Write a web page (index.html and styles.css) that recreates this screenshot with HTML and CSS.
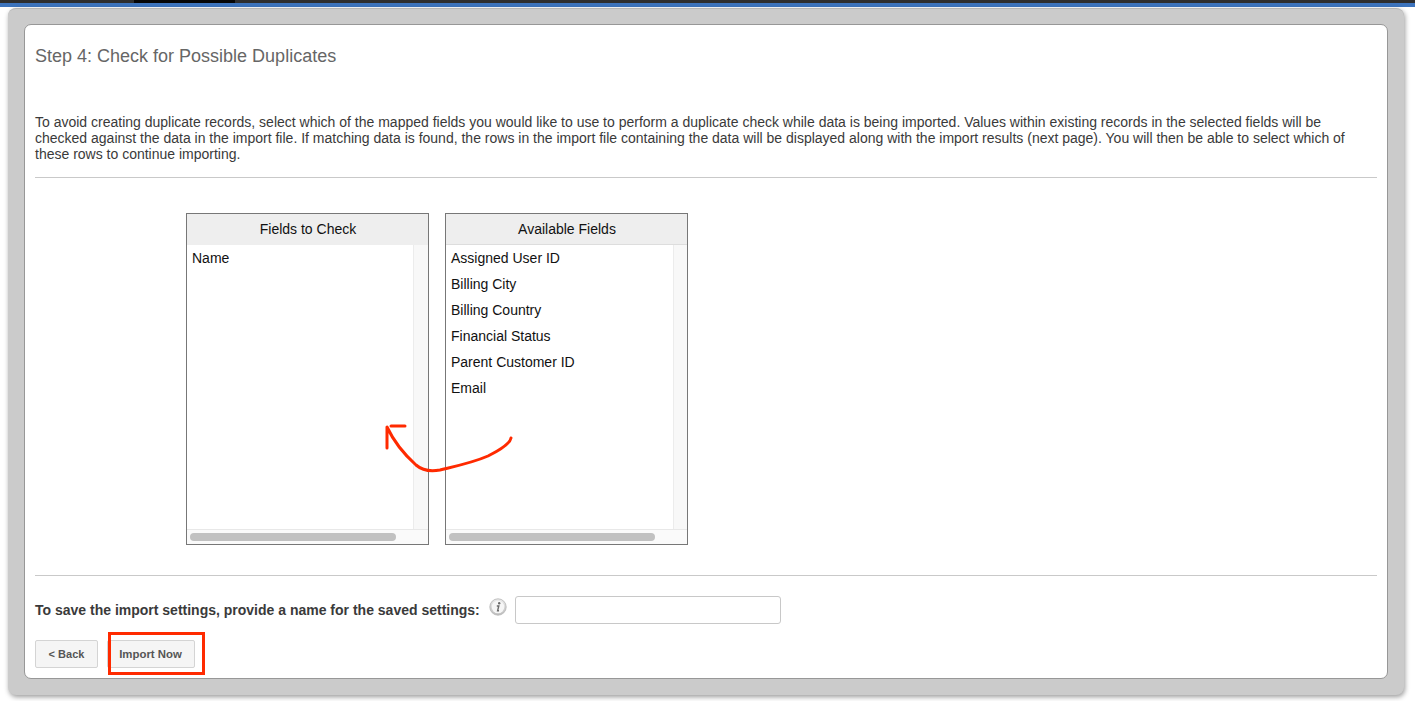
FILE: index.html
```html
<!DOCTYPE html>
<html lang="en">
<head>
<meta charset="utf-8">
<title>Step 4: Check for Possible Duplicates</title>
<link rel="stylesheet" href="styles.css">
</head>
<body>
<div class="topbar"><div class="topbar-dark"><span class="topbar-tab"></span></div><div class="topbar-blue"></div></div>
<main class="outer">
  <section class="panel">
    <h1 class="title">Step 4: Check for Possible Duplicates</h1>
    <p class="intro">To avoid creating duplicate records, select which of the mapped fields you would like to use to perform a duplicate check while data is being imported. Values within existing records in the selected fields will be checked against the data in the import file. If matching data is found, the rows in the import file containing the data will be displayed along with the import results (next page). You will then be able to select which of these rows to continue importing.</p>
    <hr class="rule rule-top">
    <div class="lists">
      <div class="list">
        <div class="list-head list-head-flat">Fields to Check</div>
        <div class="list-middle">
          <ul class="items"><li>Name</li></ul>
          <div class="vtrack vtrack-wide"></div>
        </div>
        <div class="htrack"><div class="hthumb"></div></div>
      </div>
      <div class="list">
        <div class="list-head">Available Fields</div>
        <div class="list-middle">
          <ul class="items">
            <li>Assigned User ID</li>
            <li>Billing City</li>
            <li>Billing Country</li>
            <li>Financial Status</li>
            <li>Parent Customer ID</li>
            <li>Email</li>
          </ul>
          <div class="vtrack"></div>
        </div>
        <div class="htrack"><div class="hthumb"></div></div>
      </div>
    </div>
    <hr class="rule rule-bottom">
    <div class="save-row">
      <label class="save-label" for="settings">To save the import settings, provide a name for the saved settings:</label>
      <svg class="info" viewBox="0 0 18 18" width="18" height="18" aria-hidden="true">
        <defs><linearGradient id="ig" x1="0" y1="0" x2="0" y2="1"><stop offset="0" stop-color="#ececec"/><stop offset="1" stop-color="#bdbdbd"/></linearGradient></defs>
        <circle cx="9" cy="9" r="8.2" fill="url(#ig)" stroke="#b4b4b4" stroke-width=".8"/>
        <circle cx="9" cy="9" r="6.3" fill="#f6f6f6"/>
        <circle cx="10.2" cy="5.2" r="1.2" fill="#6a6a6a"/>
        <path d="M7.8 8h2l-1.2 4.8h1.4" fill="none" stroke="#6a6a6a" stroke-width="1.4"/>
      </svg>
      <input class="save-input" id="settings" type="text">
    </div>
    <div class="actions">
      <button class="btn" type="button">&lt; Back</button>
      <button class="btn btn-import" type="button">Import Now</button>
    </div>
  </section>
</main>
<svg class="arrow" viewBox="0 0 140 60" width="140" height="60" aria-hidden="true">
  <path d="M131 18C130 24 120 30 108 36C92 43 72 47 60 50C50 52 43 51 36 45C26 36 15 24 7 7V28M11 6H25" fill="none" stroke="#ff2a00" stroke-width="3" stroke-linecap="round" stroke-linejoin="round"/>
</svg>
<div class="highlight"></div>
</body>
</html>
```
FILE: styles.css
```css
* { box-sizing: border-box; }
html, body { margin: 0; height: 100%; }
body {
  position: relative;
  height: 701px;
  overflow: hidden;
  background: #fff;
  font-family: "Liberation Sans", Arial, sans-serif;
  color: #222;
}
.topbar { height: 7px; }
.topbar-dark { height: 3px; background: #2e2e2e; }
.topbar-tab { display: block; width: 101px; height: 3px; margin-left: 134px; background: #050505; }
.topbar-blue { height: 4px; background: #3d74bd; }
.outer {
  margin: 1px 11px 0 8px;
  width: 1396px;
  height: 687px;
  padding: 16px;
  background: #cbcbcb;
  border-radius: 8px;
  border-top: 1px solid #b5b5b5;
  box-shadow: 1px 2px 5px rgba(0, 0, 0, .4);
}
.panel {
  height: 655px;
  margin-top: -1px;
  padding: 0 10px;
  background: #fff;
  border: 1px solid #979797;
  border-radius: 7px;
}
.title {
  margin: 21px 0 0;
  font-size: 18px;
  font-weight: 400;
  line-height: 20px;
  color: #666;
}
.intro {
  margin: 48px 0 0;
  padding-right: 20px;
  font-size: 14px;
  line-height: 16px;
  color: #3a3a3a;
}
.rule { margin: 0; height: 1px; border: 0; background: #c9c9c9; }
.rule-top { margin-top: 15px; }
.lists { display: flex; gap: 16px; margin: 35px 0 0 151px; }
.list {
  display: flex;
  flex-direction: column;
  width: 243px;
  height: 332px;
  border: 1px solid #777;
}
.list-head {
  height: 31px;
  padding-left: 1px;
  background: #eee;
  border-bottom: 1px solid #ddd;
  font-size: 14px;
  line-height: 30px;
  text-align: center;
  color: #111;
}
.list-head-flat { border-bottom-color: #eee; }
.list-middle { flex: 1; display: flex; min-height: 0; }
.items { flex: 1; margin: 0; padding: 0 0 0 5px; list-style: none; font-size: 14px; line-height: 26px; color: #111; }
.vtrack { width: 14px; background: #f8f8f8; border-left: 1px solid #ececec; }
.vtrack-wide { width: 15px; }
.htrack { height: 15px; padding: 3px 17px 3px 3px; background: #fafafa; border-top: 1px solid #e8e8e8; }
.hthumb { width: 206px; height: 8px; background: #c1c1c1; border-radius: 4px; }
.rule-bottom { margin-top: 30px; }
.save-row { display: flex; align-items: flex-start; margin-top: 20px; height: 28px; }
.save-label { margin-top: 6px; font-size: 14px; font-weight: 700; line-height: 16px; color: #3a3a3a; }
.info { margin: 2px 8px 0 9px; }
.save-input { width: 266px; height: 28px; background: #fff; border: 1px solid #c8c8c8; border-radius: 3px; }
.actions { display: flex; gap: 9px; margin-top: 16px; }
.btn {
  width: 63px;
  height: 28px;
  padding: 0;
  background: #f5f5f5;
  border: 1px solid #d4d4d4;
  border-radius: 2px;
  font-family: "Liberation Sans", Arial, sans-serif;
  font-size: 11px;
  font-weight: 700;
  color: #555;
}
.btn-import { width: 88px; padding-right: 1px; font-size: 11.4px; }
.arrow { position: absolute; left: 380px; top: 420px; overflow: visible; }
.highlight {
  position: absolute;
  left: 108px;
  top: 632px;
  width: 97px;
  height: 43px;
  border: 3px solid #ff2a00;
}
```
